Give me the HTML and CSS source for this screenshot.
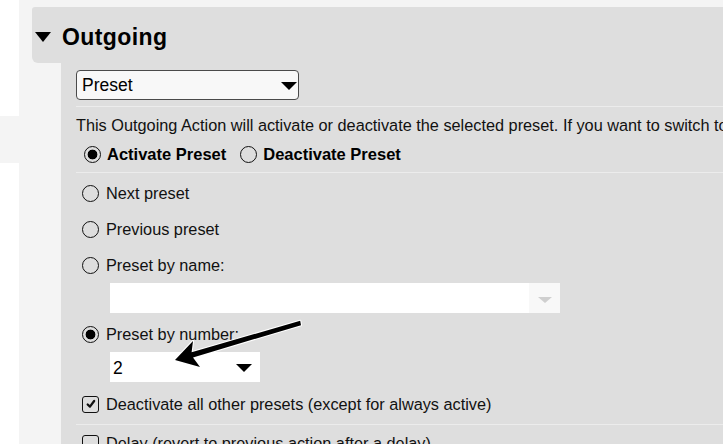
FILE: index.html
```html
<!DOCTYPE html>
<html lang="en">
<head>
<meta charset="utf-8">
<title>Outgoing</title>
<link rel="stylesheet" href="styles.css">
</head>
<body>
<div class="page">
  <aside class="side">
    <div class="side-top"></div>
    <div class="side-gap"></div>
    <div class="side-rest"></div>
  </aside>
  <main class="main">
    <section class="panel">
      <header class="panel-head">
        <span class="caret"></span>
        <h2 class="title">Outgoing</h2>
      </header>
      <div class="panel-body">
        <div class="select select-type"><span class="select-text">Preset</span><span class="tri"></span></div>
        <div class="sep sep-a"></div>
        <p class="desc">This Outgoing Action will activate or deactivate the selected preset. If you want to switch to another preset</p>
        <div class="mode">
          <span class="mode-item"><span class="radio checked"></span>Activate Preset</span>
          <span class="mode-item"><span class="radio"></span>Deactivate Preset</span>
        </div>
        <div class="sep sep-b"></div>
        <div class="opt opt-first"><span class="radio"></span>Next preset</div>
        <div class="opt"><span class="radio"></span>Previous preset</div>
        <div class="opt"><span class="radio"></span>Preset by name:</div>
        <div class="combo"><span class="combo-field"></span><span class="combo-btn"><span class="tri tri-light"></span></span></div>
        <div class="opt opt-num"><span class="radio checked"></span>Preset by number:</div>
        <div class="select select-num"><span class="select-text">2</span><span class="tri"></span></div>
        <div class="opt opt-check"><span class="check"><svg viewBox="0 0 16 16" width="14" height="14"><path d="M4.2 8.6 L6.8 11 L11.6 4.6" fill="none" stroke="#111" stroke-width="2.6" stroke-linecap="round" stroke-linejoin="round"/></svg></span>Deactivate all other presets (except for always active)</div>
        <div class="sep sep-c"></div>
        <div class="opt opt-last"><span class="check"></span>Delay (revert to previous action after a delay)</div>
      </div>
    </section>
  </main>
</div>
<svg class="annot" width="723" height="444" viewBox="0 0 723 444">
  <polygon points="175,360 193,341 191.6,352.2 300.2,320.8 301,325.2 193,357.4 200,367" fill="#000" stroke="#fff" stroke-width="2.2" stroke-linejoin="round" paint-order="stroke"/>
</svg>
</body>
</html>
```

FILE: styles.css
```css
* { box-sizing: border-box; }
html, body {
  margin: 0;
  padding: 0;
  width: 723px;
  height: 444px;
  overflow: hidden;
  background: #f4f4f4;
  font-family: "Liberation Sans", Arial, sans-serif;
  color: #111;
}
.page {
  display: flex;
  height: 444px;
}
.side {
  width: 19px;
  flex: none;
  display: flex;
  flex-direction: column;
}
.side-top { height: 116px; background: #fff; }
.side-gap { height: 47px; }
.side-rest { flex: 1; background: #fff; }
.main {
  flex: 1;
  min-width: 0;
  padding: 7px 0 0 13px;
  overflow: hidden;
}
.panel {
  display: flex;
  flex-direction: column;
  height: 100%;
}
.panel-head {
  height: 56px;
  flex: none;
  background: #dedede;
  border-radius: 3px 0 0 6px;
  display: flex;
  align-items: center;
  padding-top: 4px;
}
.caret {
  width: 0;
  height: 0;
  margin-left: 3px;
  border-left: 8.5px solid transparent;
  border-right: 8.5px solid transparent;
  border-top: 10px solid #000;
}
.title {
  margin: 0 0 0 11px;
  font-size: 23px;
  font-weight: bold;
  letter-spacing: 0.4px;
  color: #000;
}
.panel-body {
  flex: 1;
  margin-left: 29px;
  background: #dedede;
  padding: 7px 0 0 15px;
  white-space: nowrap;
  overflow: hidden;
}
.select {
  height: 30px;
  display: flex;
  align-items: center;
  justify-content: space-between;
}
.select-type {
  width: 223px;
  border: 1px solid #4a4a4a;
  border-radius: 4px;
  background: #f8f8f8;
  padding: 1px 1px 0 5px;
}
.select-text {
  font-size: 17.5px;
  color: #000;
}
.tri {
  width: 0;
  height: 0;
  border-left: 8.5px solid transparent;
  border-right: 8.5px solid transparent;
  border-top: 8px solid #000;
}
.tri-light {
  border-left-width: 7px;
  border-right-width: 7px;
  border-top: 6px solid #cfcfcf;
}
.sep {
  height: 1px;
  background: #ececec;
}
.sep-a { margin-top: 6px; }
.sep-b { margin-top: 8px; }
.sep-c { margin-top: 2px; }
.desc {
  margin: 9px 0 0 0;
  font-size: 16.3px;
  line-height: 18px;
}
.mode {
  margin-top: 10px;
  height: 20px;
  display: flex;
  align-items: center;
  gap: 14px;
  padding-left: 8px;
  font-size: 16.5px;
  font-weight: bold;
  color: #000;
}
.mode-item {
  display: flex;
  align-items: center;
  gap: 6px;
}
.radio {
  width: 17px;
  height: 17px;
  flex: none;
  border: 1.6px solid #111;
  border-radius: 50%;
  display: inline-block;
}
.radio.checked {
  background: radial-gradient(circle, #000 0 4.6px, transparent 5.2px);
}
.opt {
  height: 36px;
  display: flex;
  align-items: center;
  gap: 7px;
  padding-left: 6px;
  font-size: 16.3px;
}
.opt-first { margin-top: 2px; }
.opt-num { margin-top: 3px; }
.opt-check { margin-top: 4px; }
.combo {
  margin-left: 34px;
  width: 450px;
  height: 30px;
  display: flex;
  background: #fff;
}
.combo-field { flex: 1; }
.combo-btn {
  width: 31px;
  background: #f8f8f8;
  display: flex;
  align-items: center;
  justify-content: center;
  padding-top: 3px;
}
.select-num {
  margin-left: 34px;
  width: 150px;
  background: #fff;
  padding: 2px 8px 0 3px;
}
.check {
  width: 17px;
  height: 17px;
  flex: none;
  border: 1.6px solid #111;
  border-radius: 3px;
  display: flex;
  align-items: center;
  justify-content: center;
}
.annot {
  position: absolute;
  left: 0;
  top: 0;
  pointer-events: none;
}
```
